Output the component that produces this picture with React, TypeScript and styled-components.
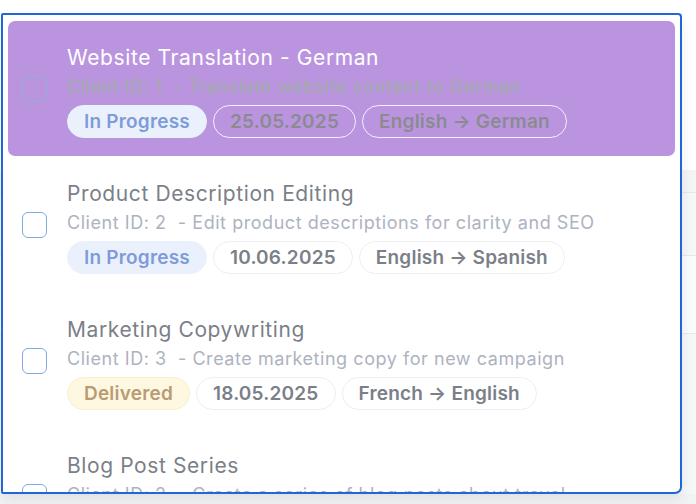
import React from "react";
import styled, { createGlobalStyle } from "styled-components";

const Global = createGlobalStyle`
  html, body { margin: 0; padding: 0; background: #ffffff; }
  body { font-family: Inter, "Noto Sans", sans-serif; width: 696px; height: 504px; overflow: hidden; }
`;

const Page = styled.div`
  position: relative;
  width: 696px;
  height: 504px;
  background: #ffffff;
  overflow: hidden;
`;

const BackTable = styled.div`
  display: flex;
  flex-direction: column;
  padding-top: 170px;
`;

const BackRow = styled.div<{ $h: number; $bg: string }>`
  height: ${(p) => p.$h}px;
  background: ${(p) => p.$bg};
  border-bottom: 1px solid #e6e8ec;
`;

const Shade = styled.div`
  position: absolute;
  left: 0;
  right: 0;
  top: 494px;
  bottom: 0;
  background: #f2f3f5;
`;

const Listbox = styled.div`
  position: absolute;
  left: 1px;
  top: 13px;
  width: 667px;
  height: 471px;
  border: 2px solid #1f66d8;
  border-radius: 2px 4px 7px 2px;
  background: #ffffff;
  box-shadow: 0 6px 14px rgba(0, 0, 0, 0.08);
  overflow: hidden;
  padding: 6px 5px 0 5px;
  box-sizing: content-box;
  display: flex;
  flex-direction: column;
  gap: 1px;
`;

const Item = styled.div<{ $selected?: boolean }>`
  display: flex;
  align-items: center;
  gap: 20px;
  height: 135px;
  flex: 0 0 135px;
  box-sizing: border-box;
  padding: 0 14px;
  border-radius: 7px;
  background: ${(p) => (p.$selected ? "#bb94e0" : "transparent")};
`;

const Check = styled.div<{ $selected?: boolean }>`
  width: 23px;
  height: 24px;
  flex: 0 0 auto;
  border: 1.5px solid ${(p) => (p.$selected ? "#8fb0d8" : "#7faae2")};
  border-radius: 6px;
  background: ${(p) => (p.$selected ? "transparent" : "#ffffff")};
  margin-top: 1px;
`;

const Body = styled.div`
  display: flex;
  flex-direction: column;
  padding-top: 5px;
`;

const Title = styled.div<{ $selected?: boolean }>`
  font-size: 21px;
  line-height: 28px;
  letter-spacing: 0.6px;
  font-weight: 400;
  color: ${(p) => (p.$selected ? "#ffffff" : "#7b7f88")};
  white-space: nowrap;
`;

const Sub = styled.div<{ $selected?: boolean }>`
  margin-top: 3px;
  font-size: 18px;
  line-height: 24px;
  letter-spacing: 0.55px;
  color: ${(p) => (p.$selected ? "#9eaca6" : "#adb3bf")};
  white-space: pre;
`;

const Chips = styled.div`
  display: flex;
  gap: 6px;
  margin-top: 6px;
`;

const Chip = styled.div<{ $kind: "progress" | "delivered" | "plain"; $selected?: boolean }>`
  height: 33px;
  box-sizing: border-box;
  padding: 0 16px;
  display: flex;
  align-items: center;
  border-radius: 17px;
  font-size: 19px;
  letter-spacing: 0.2px;
  font-weight: 600;
  white-space: nowrap;
  ${(p) =>
    p.$kind === "progress"
      ? `background: #eaf1fc; color: #7f9bd8; border: 1px solid #eaf1fc;`
      : p.$kind === "delivered"
      ? `background: #fdf8df; color: #b99c76; border: 1px solid #f7f0d0;`
      : p.$selected
      ? `background: transparent; color: #8a8b90; border: 1px solid rgba(255,255,255,0.85);`
      : `background: #ffffff; color: #7b7f88; border: 1px solid #eceef2;`}
`;

type Row = {
  title: string;
  id: number;
  desc: string;
  status: "In Progress" | "Delivered";
  date: string;
  lang: string;
};

const rows: Row[] = [
  { title: "Website Translation - German", id: 1, desc: "Translate website content to German", status: "In Progress", date: "25.05.2025", lang: "English → German" },
  { title: "Product Description Editing", id: 2, desc: "Edit product descriptions for clarity and SEO", status: "In Progress", date: "10.06.2025", lang: "English → Spanish" },
  { title: "Marketing Copywriting", id: 3, desc: "Create marketing copy for new campaign", status: "Delivered", date: "18.05.2025", lang: "French → English" },
  { title: "Blog Post Series", id: 2, desc: "Create a series of blog posts about travel", status: "In Progress", date: "01.07.2025", lang: "English → Italian" },
];

export default function App() {
  return (
    <Page>
      <Global />
      <BackTable>
        <BackRow $h={22} $bg="#f4f5f7" />
        <BackRow $h={62} $bg="#f6f7f9" />
        <BackRow $h={77} $bg="#fafbfc" />
        <BackRow $h={160} $bg="#f6f7f9" />
      </BackTable>
      <Shade />
      <Listbox>
        {rows.map((r, i) => {
          const sel = i === 0;
          return (
            <Item key={i} $selected={sel}>
              <Check $selected={sel} />
              <Body>
                <Title $selected={sel}>{r.title}</Title>
                <Sub $selected={sel}>{`Client ID: ${r.id}  - ${r.desc}`}</Sub>
                <Chips>
                  <Chip $kind={r.status === "Delivered" ? "delivered" : "progress"} $selected={sel}>
                    {r.status}
                  </Chip>
                  <Chip $kind="plain" $selected={sel}>{r.date}</Chip>
                  <Chip $kind="plain" $selected={sel}>{r.lang}</Chip>
                </Chips>
              </Body>
            </Item>
          );
        })}
      </Listbox>
    </Page>
  );
}
